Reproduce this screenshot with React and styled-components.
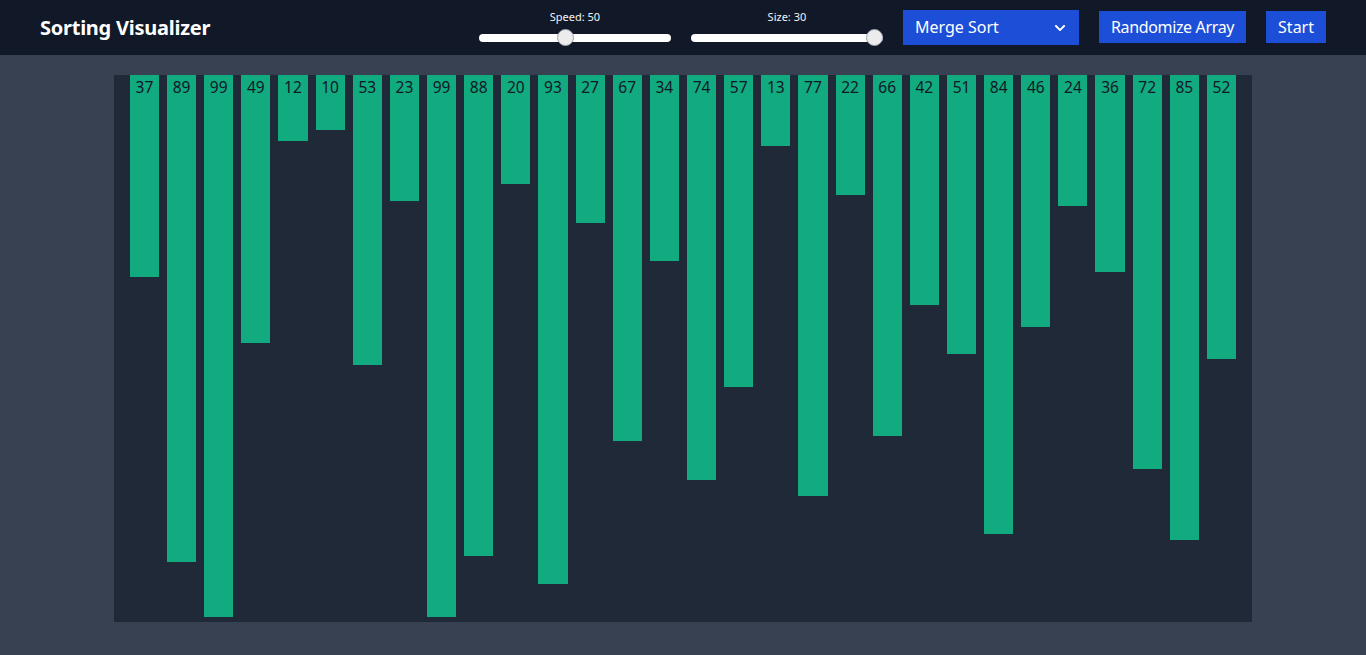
import React, { useState } from "react";
import styled, { createGlobalStyle } from "styled-components";
import { FaChevronDown } from "react-icons/fa";

const GlobalStyle = createGlobalStyle`
  body {
    margin: 0;
    font-family: "Noto Sans", "Open Sans", sans-serif;
    background: #374151;
  }
  * { box-sizing: border-box; }
`;

const Header = styled.header`
  height: 55px;
  background: #111827;
  display: flex;
  align-items: center;
  justify-content: space-between;
  padding: 0 40px 1px;
  color: #fff;
`;

const Title = styled.h1`
  margin: 0;
  font-size: 20px;
  font-weight: 700;
  letter-spacing: -0.25px;
`;

const Controls = styled.div`
  display: flex;
  align-items: center;
  gap: 20px;
`;

const SliderBox = styled.label`
  display: flex;
  flex-direction: column;
  align-items: center;
  gap: 10px;
  font-size: 11px;
  line-height: 14px;
  color: #f3f4f6;
  margin-top: -3px;
`;

const Range = styled.input`
  -webkit-appearance: none;
  appearance: none;
  width: 192px;
  height: 8px;
  margin: 0;
  border-radius: 4px;
  background: #fff;
  outline: none;

  &::-webkit-slider-thumb {
    -webkit-appearance: none;
    width: 17px;
    height: 17px;
    border-radius: 50%;
    background: #ececec;
    border: 1px solid #9ca3af;
  }
`;

const SelectWrap = styled.div`
  position: relative;
  width: 176px;
  height: 35px;
`;

const Select = styled.select`
  appearance: none;
  width: 100%;
  height: 100%;
  border: none;
  border-radius: 0;
  background: #1d4ed8;
  color: #fff;
  font-family: inherit;
  font-size: 16px;
  padding: 0 12px;
  outline: none;
`;

const Chevron = styled.span`
  position: absolute;
  right: 13px;
  top: 11px;
  color: #fff;
  font-size: 12px;
  pointer-events: none;
`;

const Button = styled.button`
  height: 32px;
  padding: 0 12px;
  border: none;
  background: #1d4ed8;
  color: #fff;
  font-family: inherit;
  font-size: 16px;
  letter-spacing: ${(p) => (p.$tight ? "-0.35px" : "0")};
  cursor: pointer;
`;

const Main = styled.main`
  min-height: calc(100vh - 55px);
  padding-top: 20px;
`;

const Board = styled.div`
  width: 83.3333%;
  height: 547px;
  margin: 0 auto;
  padding: 0 16px;
  background: #1f2937;
  display: flex;
  align-items: flex-start;
  gap: 8px;
`;

const Bar = styled.div`
  flex: 1;
  background: #12aa7f;
  color: #111827;
  text-align: center;
  font-size: 15.5px;
  line-height: 24px;
`;

const values = [
  37, 89, 99, 49, 12, 10, 53, 23, 99, 88, 20, 93, 27, 67, 34,
  74, 57, 13, 77, 22, 66, 42, 51, 84, 46, 24, 36, 72, 85, 52,
];

export default function App() {
  const [speed, setSpeed] = useState(50);
  const [size, setSize] = useState(30);

  return (
    <>
      <GlobalStyle />
      <Header>
        <Title>Sorting Visualizer</Title>
        <Controls>
          <SliderBox>
            Speed: {speed}
            <Range type="range" min="10" max="100" value={speed} onChange={(e) => setSpeed(+e.target.value)} />
          </SliderBox>
          <SliderBox>
            Size: {size}
            <Range type="range" min="5" max="30" value={size} onChange={(e) => setSize(+e.target.value)} />
          </SliderBox>
          <SelectWrap>
            <Select defaultValue="merge">
              <option value="merge">Merge Sort</option>
              <option value="quick">Quick Sort</option>
              <option value="bubble">Bubble Sort</option>
            </Select>
            <Chevron><FaChevronDown /></Chevron>
          </SelectWrap>
          <Button $tight>Randomize Array</Button>
          <Button>Start</Button>
        </Controls>
      </Header>
      <Main>
        <Board>
          {values.map((v, i) => (
            <Bar key={i} style={{ height: `${v}%` }}>{v}</Bar>
          ))}
        </Board>
      </Main>
    </>
  );
}
